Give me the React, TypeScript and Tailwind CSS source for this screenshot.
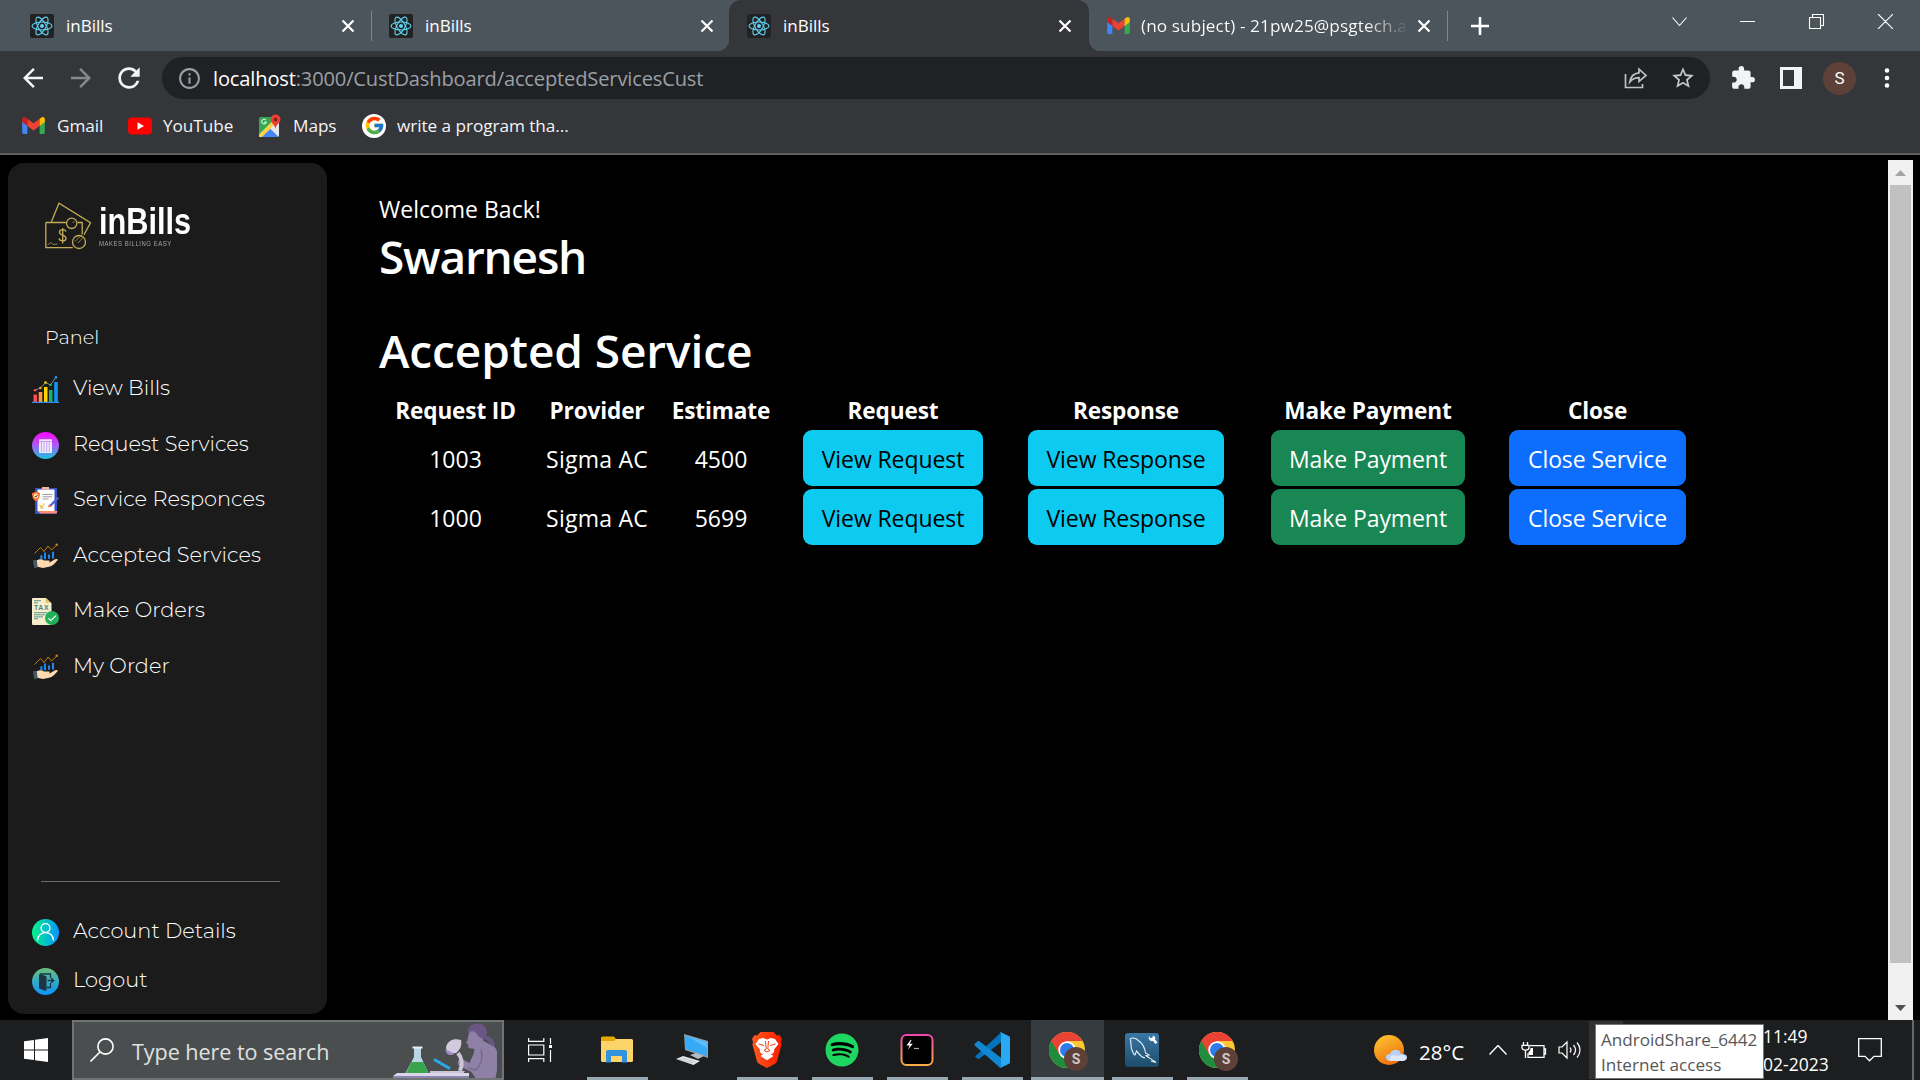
import type { ReactNode } from "react";
import { MdArrowBack, MdArrowForward, MdRefresh, MdInfoOutline, MdStarBorder, MdExtension } from "react-icons/md";
import { FaSpotify } from "react-icons/fa";
import { FcGoogle } from "react-icons/fc";

/* ---------- browser icons ---------- */

const ReactLogo = () => (
  <svg viewBox="0 0 24 24" className="h-6 w-6 shrink-0">
    <rect width="24" height="24" rx="2" fill="#222" />
    <g fill="none" stroke="#5fd3f3" strokeWidth="1.1">
      <ellipse cx="12" cy="12" rx="10" ry="4" />
      <ellipse cx="12" cy="12" rx="10" ry="4" transform="rotate(60 12 12)" />
      <ellipse cx="12" cy="12" rx="10" ry="4" transform="rotate(120 12 12)" />
    </g>
    <circle cx="12" cy="12" r="2" fill="#5fd3f3" />
  </svg>
);

const GmailLogo = () => (
  <svg viewBox="0 0 24 18" className="h-[17px] w-[23px] shrink-0">
    <path d="M0 3v13.5A1.5 1.5 0 0 0 1.500 18H5.500V7Z" fill="#4285f4" />
    <path d="M24 3v13.500A1.500 1.500 0 0 1 22.500 18H18.500V7Z" fill="#34a853" />
    <path d="M5.500 9.500V1.800L12 6.700l6.500-4.900v7.700L12 14.400Z" fill="#ea4335" />
    <path d="M18.500 1.800v7.700L24 5.400V2.500C24 .4 21.800-.6 20 .7Z" fill="#fbbc04" />
    <path d="M5.500 1.800v7.700L0 5.400V2.500C0 .4 2.200-.6 4 .7Z" fill="#c5221f" />
  </svg>
);

const YouTubeLogo = () => (
  <svg viewBox="0 0 24 18" className="h-[18px] w-6 shrink-0">
    <rect y="0.500" width="24" height="17" rx="4" fill="#f00" />
    <path d="M9.500 5.300v7.400L16 9Z" fill="#fff" />
  </svg>
);

const MapsLogo = () => (
  <svg viewBox="0 0 24 24" className="h-6 w-6 shrink-0">
    <rect x="1" y="3" width="20" height="20" rx="1.500" fill="#34a853" />
    <path d="M2 23 21 4v17a2 2 0 0 1-2 2Z" fill="#dfe3e8" />
    <path d="M2.500 23 11.500 14l9 9Z" fill="#4285f4" />
    <path d="M1 20.500 17.500 4l3 3L4 23H1Z" fill="#fbd24a" />
    <path d="m13 13 8 8V8Z" fill="#e6e8eb" />
    <path d="M17.500.5a5 5 0 0 0-5 5c0 3.700 4.300 4.500 5 9.500.7-5 5-5.800 5-9.500a5 5 0 0 0-5-5Z" fill="#ea4335" />
    <circle cx="17.500" cy="5.500" r="1.900" fill="#8c1c13" />
    <path d="M8 6.200a2.400 2.400 0 1 0 .4 2H6.200" fill="none" stroke="#fff" strokeWidth="1" />
  </svg>
);

const CloseX = () => (
  <svg viewBox="0 0 14 14" className="h-[14px] w-[14px] shrink-0">
    <path d="m1.500 1.500 11 11m0-11-11 11" stroke="#fff" strokeWidth="2.200" fill="none" />
  </svg>
);

const ShareIcon = () => (
  <svg viewBox="0 0 24 22" className="h-[22px] w-6 shrink-0" fill="none" stroke="#bdc1c6" strokeWidth="1.700">
    <path d="M1.500 7v13.500h17V17" />
    <path d="M15 2.200v3.600C9.500 6.300 6.600 9.500 5.800 15c2.600-3.300 5.400-4.300 9.200-4.300v3.800L22 8.400Z" />
  </svg>
);

/* ---------- sidebar icons ---------- */

const ChartIcon = () => (
  <svg viewBox="0 0 27 27" className="h-[27px] w-[27px]">
    <rect x="1.500" y="18.500" width="3.500" height="7.500" fill="#ff4b55" />
    <rect x="6.700" y="16" width="3.600" height="10" fill="#ff9a3c" />
    <rect x="12" y="11" width="3.500" height="15" fill="#ffd400" />
    <rect x="17" y="14" width="3.500" height="12" fill="#19b36b" />
    <rect x="22.200" y="6" width="3.600" height="20" fill="#1495f5" />
    <rect y="25.800" width="27" height="1.200" fill="#2b8ff0" />
    <path d="m2.500 14.500 6-2.500 5-5.500 5 2.500 5.500-8" fill="none" stroke="#8996a3" strokeWidth="0.900" />
    <circle cx="3" cy="14.300" r="1.300" fill="#ff4b55" />
    <circle cx="8.400" cy="12" r="1.300" fill="#ff9a3c" />
    <circle cx="13.500" cy="6.500" r="1.300" fill="#ffd400" />
    <circle cx="18.500" cy="9" r="1.300" fill="#19b36b" />
    <circle cx="24" cy="1.400" r="1.300" fill="#1495f5" />
  </svg>
);

const RequestIcon = () => (
  <svg viewBox="0 0 27 27" className="h-[27px] w-[27px]">
    <defs>
      <linearGradient id="request" x1="0" y1="0" x2="0" y2="1">
        <stop offset="0" stopColor="#fb05ff" />
        <stop offset="0.500" stopColor="#a95cf5" />
        <stop offset="1" stopColor="#16c5de" />
      </linearGradient>
    </defs>
    <circle cx="13.500" cy="13.500" r="13.500" fill="url(#request)" />
    <rect x="7" y="7.200" width="13" height="13.800" rx="0.800" fill="#fff" fillOpacity="0.850" />
    <path d="M9.500 9v11M12 9v11M14.700 9v11M17.300 9v11M7 9.500h13" stroke="#b58cf0" strokeWidth="0.700" />
  </svg>
);

const ResponseIcon = () => (
  <svg viewBox="0 0 27 27" className="h-[27px] w-[27px]">
    <rect x="3" y="1" width="22" height="26" fill="#3b4fc4" />
    <rect x="5.500" y="2.500" width="17" height="21.500" fill="#fff" />
    <rect x="10" y="0" width="7" height="2.600" fill="#f8b5a0" />
    <path d="M5.500 24h20l-1 2.400h-16Z" fill="#ff8a65" />
    <path d="M10.500 7.500h10M10.500 9.800h9.500M10.500 12h6" stroke="#9a9a9a" strokeWidth="1" />
    <path d="m0 6 4-1.300L8 6c0 4-1 7-4 8.200C1 13 0 10 0 6Z" fill="#ff6b35" />
    <circle cx="4" cy="9" r="2.400" fill="#ffe0a3" />
    <path d="m2.800 9 1 1.100L5.600 8" stroke="#333" strokeWidth="0.900" fill="none" />
    <path d="m7.500 18 2 2 3-3.500M8 21h4" stroke="#f2b632" strokeWidth="1.100" fill="none" />
    <path d="m17 18.500 8-8.300 2 .2-1 2.400-7.500 7.200Z" fill="#4a63d8" />
    <path d="m15.500 20.500 1.700-3.400 2.500 2.400Z" fill="#ef7b57" />
  </svg>
);

const HandChartIcon = () => (
  <svg viewBox="0 0 27 27" className="h-[27px] w-[27px]">
    <path d="m2.500 10.500 6-6 3.500 4 4-5.500 3.500 4L25 1.800" fill="none" stroke="#d9820f" strokeWidth="0.900" />
    <circle cx="24.700" cy="1.800" r="1.200" fill="#d9820f" />
    <path d="M8.300 12.300h2.200v4H8.300ZM12 9.500h2v6.700h-2ZM16 11.500h2v4.200h-2ZM20 8.700h2v6.700h-2Z" fill="#2283e8" />
    <path d="M1.200 17h3.600l.8 7.500-3 .8C1.500 23.500 1.200 20 1.200 17Z" fill="#455a64" />
    <path d="M4.800 17.300c3-1.600 5-1.300 7.200.2h4.800c1.300 0 1.300 1.500 0 1.700h-3.300 4.500c2.500-1.300 4.500-3.400 7.200-3.200.8.500.5 1.300-.3 2-2.500 2.600-4.700 5.500-8 5.700L11 25l-5.500-1.200Z" fill="#ffd9b0" />
  </svg>
);

const TaxIcon = () => (
  <svg viewBox="0 0 27 27" className="h-[27px] w-[27px]">
    <path d="M1 0h13l5.500 5.500V27H1a1 1 0 0 1-1-1V1a1 1 0 0 1 1-1Z" fill="#f6efc9" />
    <path d="M13.500 0v4.800h5.800Z" fill="#e9bf5c" />
    <path d="M2 2.700h7M2 4.800h4M2 14.700h13M2 16.800h11M2 18.900h9M2 20.800h4" stroke="#4d8a88" strokeWidth="0.900" />
    <text x="2" y="12.200" fontSize="6.800" fontWeight="700" fontFamily="Liberation Sans, sans-serif" fill="#4d7f86" textLength="14.500">TAX</text>
    <circle cx="20" cy="20" r="7" fill="#22b05b" />
    <path d="m16.300 20.300 2.500 2.200 5.200-4.800" fill="none" stroke="#fff" strokeWidth="1.100" />
  </svg>
);

const AccountIcon = () => (
  <svg viewBox="0 0 27 27" className="h-[27px] w-[27px]">
    <defs>
      <linearGradient id="account">
        <stop offset="0" stopColor="#00f58a" />
        <stop offset="1" stopColor="#0892ff" />
      </linearGradient>
    </defs>
    <circle cx="13.500" cy="13.500" r="13.500" fill="url(#account)" />
    <g fill="none" stroke="#fff" strokeWidth="1.400">
      <circle cx="13.500" cy="9" r="4.400" />
      <path d="M5.500 21.500c.3-10.500 15.700-10.500 16 0" />
    </g>
  </svg>
);

const LogoutIcon = () => (
  <svg viewBox="0 0 27 27" className="h-[27px] w-[27px]">
    <defs>
      <linearGradient id="logout" x1="0" y1="0" x2="0" y2="1">
        <stop offset="0" stopColor="#6cc07a" />
        <stop offset="0.500" stopColor="#34a9c4" />
        <stop offset="1" stopColor="#0a95ff" />
      </linearGradient>
    </defs>
    <circle cx="13.500" cy="13.500" r="13.500" fill="url(#logout)" />
    <path d="M7 6.200c2.500.2 5 1 7.500 2v14.500c-3-.2-6-1.200-7.500-3Z" fill="#1d3540" />
    <path d="M8 6h10.500v4M18.500 15v4.500h-4M15.500 12.500h6m-2.300-2.300 2.500 2.300-2.500 2.300" fill="none" stroke="#1d3540" strokeWidth="1.300" />
  </svg>
);

const BillsMark = () => (
  <svg viewBox="0 0 46 48" className="h-12 w-[46px] shrink-0" fill="none" stroke="#c5ab58" strokeWidth="1.300">
    <path d="M.8 20.500h20M.8 20.500v25.200h27M6.500 19.500 14 1.200l31.500 19.600-6.500 12M32.500 20.500h4.700v12" />
    <circle cx="26.700" cy="21.300" r="5.200" />
    <circle cx="34" cy="40" r="6.500" />
    <path d="M38 35.500 33 41M35 34.500l-5 5M2.500 43l3-2.500 3 2 4-.5M29.500 19l-2 2" strokeWidth="0.700" />
    <path d="M21 29.500c-1-2.500-6.500-2.500-6.500.7s6.500 2.600 6.500 6-6 3.400-7 .3M17.700 26v15.500" />
  </svg>
);

/* ---------- taskbar icons ---------- */

const SearchArt = () => (
  <svg viewBox="0 0 104 56" className="h-14 w-[104px] shrink-0">
    <path d="M77 9c-2 4-2 7-2.500 9l-1.500 3 2 1 .5 4 6 1-1 5-4 9-8-4c-4 0-5 5-2 7l12 6 4 6h20c3-14 4-26-1-31-4-3-8-4-11-6l-2-6 3-7Z" fill="#8f80a8" />
    <path d="M75 11C74 4 82-1 90 3c4 3 5 7 3 11 5 0 9 5 9 10-4 1-6-3-8-6-2-1-4-1-6-2l-3-2c-2-5-6-6-10-3Z" fill="#6a5683" />
    <path d="M88 27c2 8 1 15-5 21l-8-2" fill="none" stroke="#75648c" strokeWidth="1.200" />
    <path d="m42 38 14 8" stroke="#2fa8ea" strokeWidth="3" strokeLinecap="round" />
    <path d="M53 25c2-7 8-9 15-7 1 4 0 9-5 13-5 1-10 0-10-6Z" fill="#d3cadd" />
    <path d="m52.500 27 9 5-3 1c-4 0-6-2-6-6Z" fill="#a58ac8" />
    <path d="M65 31c4 5 5 11 2 18" stroke="#cdc4d8" strokeWidth="4" fill="none" />
    <path d="M37 49h35l-3 4H37Z" fill="#cbc3d6" />
    <path d="M21 25h7v10l8 17H12l9-17Z" fill="#b8d6e4" />
    <path d="M18.500 40h12l5 11.500H13Z" fill="#38a44c" />
    <path d="M19.500 25.500h10" stroke="#dff0f6" strokeWidth="2" />
    <path d="M4 51h72v3H0Z" fill="#ddd3ea" />
    <path d="M0 54h76v3H0Z" fill="#8b86b0" />
  </svg>
);

const TaskViewIcon = () => (
  <svg viewBox="0 0 24 24" className="h-6 w-6" fill="none" stroke="#fff" strokeWidth="1.200">
    <path d="M.6 0v3.400h15.200V0M.6 24v-3.400h15.200V24M.6 7h15.200v10H.6ZM22.500 0v6M22.500 12v12" />
    <rect x="21" y="7" width="3" height="3" fill="#fff" stroke="none" />
  </svg>
);

const ExplorerIcon = () => (
  <svg viewBox="0 0 32 28" className="h-7 w-8">
    <path d="M0 2A1.500 1.500 0 0 1 1.500.500H13l2 2.500v4H0Z" fill="#e6a800" />
    <path d="M0 5h13l2-2h15.500A1.500 1.500 0 0 1 32 4.500v20a1.500 1.500 0 0 1-1.500 1.500h-29A1.500 1.500 0 0 1 0 24.500Z" fill="#fdd46a" />
    <path d="M5 16a2 2 0 0 1 2-2h17a2 2 0 0 1 2 2v10.500h-5V20H10v6.500H5Z" fill="#3192dd" />
  </svg>
);

const ComputerIcon = () => (
  <svg viewBox="0 0 32 32" className="h-8 w-8">
    <path d="m8 0 24 7v17L9 16Z" fill="#8fa0aa" />
    <path d="m9 1.500 21.800 6.300V22L9.800 15Z" fill="#36a9f7" />
    <path d="M9 1.500 30.800 8v6L16 5Z" fill="#5dbcfa" />
    <path d="m14 21 6-2 8 3-6 3Z" fill="#b3bec4" />
    <path d="m0 25 7-3 17 5-6.500 4Z" fill="#e3e6e8" />
    <path d="m3 25 14 4M6 24l14 4" stroke="#a9b1b5" strokeWidth="0.600" />
  </svg>
);

const BraveIcon = () => (
  <svg viewBox="0 0 30 36" className="h-9 w-[30px]">
    <defs>
      <linearGradient id="brave">
        <stop offset="0" stopColor="#ff5a1f" />
        <stop offset="1" stopColor="#f91d00" />
      </linearGradient>
    </defs>
    <path d="M8.500 0h13L25 3.500l2.500-.5L30 7l-1 3 .6 2.500-4.400 16c-.5 2-1.200 2.600-2.500 3.500L15 36l-7.700-4C6 31 5.300 30.500 4.800 28.500L.4 12.500 1 10 0 7l2.500-4 2.500.5Z" fill="url(#brave)" />
    <path d="m15 7.500 4-1.500 4 1 3.500 5-4.500 5.500c.8 2.500-1 4-3 4.500l-2-1.200 4.500 3.200L15 28.200 8.500 24l4.500-3.200-2 1.200c-2-.5-3.800-2-3-4.500L3.500 12 7 7l4-1Z" fill="#fff" />
    <path d="m6.500 12 5.500 1.500M23.500 12 18 13.500M13.500 9l.7 8-2.200 1.500 3 1.500 3-1.500-2.200-1.500.7-8" fill="none" stroke="#fb3d10" strokeWidth="1" />
  </svg>
);

const TerminalIcon = () => (
  <svg viewBox="0 0 34 34" className="h-[34px] w-[34px]">
    <defs>
      <linearGradient id="term" x1="0" y1="0" x2="0" y2="1">
        <stop offset="0" stopColor="#f046b0" />
        <stop offset="1" stopColor="#f9ac45" />
      </linearGradient>
    </defs>
    <rect x="1.500" y="2" width="31" height="30" rx="5" fill="#000" stroke="url(#term)" strokeWidth="2" />
    <path d="m10.500 7-4 5.500h3L8 16.500l4.800-5.800H9.700L11.500 7Z" fill="#fff" />
    <path d="M14 15.500h5" stroke="#aaa" strokeWidth="1.200" />
  </svg>
);

const VsCodeIcon = () => (
  <svg viewBox="0 0 36 36" className="h-9 w-9">
    <path d="M1 24.500 3.500 26.700a1.500 1.500 0 0 0 1.800.1L27 10.300V.5Z" fill="#0274bd" />
    <path d="M1 11.500 3.500 9.300a1.500 1.500 0 0 1 1.800-.1L27 25.700V35.500L25.500 35.300 1 13.700a1.500 1.500 0 0 1 0-2.200Z" fill="#1087d0" />
    <path d="M25 35.600c1 .5 1.600.3 2.200 0L34.700 32c.8-.4 1.300-1.200 1.300-2V6c0-.8-.5-1.600-1.300-2L27.200.4c-.7-.3-1.500-.2-2.200.1 1-.3 2 .4 2 1.500v32c0 1.100-1 1.800-2 1.600Z" fill="#2aa8f2" />
  </svg>
);

const ChromeIcon = () => (
  <svg viewBox="0 0 40 40" className="h-10 w-10">
    <circle cx="18" cy="18" r="18" fill="#fcc934" />
    <path d="M18 18 2.400 9A18 18 0 0 0 18 36l7.800-13.500Z" fill="#1e8e3e" />
    <path d="M2.400 9a18 18 0 0 1 31.200 0H18l-7.800 13.500Z" fill="#ea4335" />
    <circle cx="18" cy="18" r="8.700" fill="#fff" />
    <circle cx="18" cy="18" r="7" fill="#2f7bea" />
    <circle cx="27" cy="27" r="12" fill="#5d4037" />
    <text x="27" y="32" textAnchor="middle" fontSize="14" fontWeight="700" fontFamily="Roboto, sans-serif" fill="#cfc8c5">S</text>
  </svg>
);

const WorkbenchIcon = () => (
  <svg viewBox="0 0 34 34" className="h-[34px] w-[34px]">
    <defs>
      <linearGradient id="bench" x1="0" y1="0" x2="0" y2="1">
        <stop offset="0" stopColor="#3a78a5" />
        <stop offset="1" stopColor="#1d4c6b" />
      </linearGradient>
    </defs>
    <rect width="34" height="34" rx="3" fill="url(#bench)" />
    <path d="M5 6c3-2 6-1 9 2 4 3 6 8 6.500 12l3.500 2-3 .5c2 2 5 3 10 7l-5-1.500M5 6c2 3 0 7 2 11 1 3 2 5 3 5l1.500-4c2 2 3.500 6 8.500 7" fill="none" stroke="#e8f1f6" strokeWidth="1.100" />
    <path d="m24 3 1.500 2.200 2-.7L28 2.500c2 .5 3 2.500 2 4l2.500 3-2 1.500-2.500-3c-3 .5-5-2-4-5Z" fill="#fff" />
  </svg>
);

const WeatherIcon = () => (
  <svg viewBox="0 0 33 34" className="h-[34px] w-[33px] shrink-0">
    <defs>
      <linearGradient id="sun" x1="0.200" y1="0" x2="0.700" y2="1">
        <stop offset="0" stopColor="#fbc531" />
        <stop offset="1" stopColor="#f06a0a" />
      </linearGradient>
    </defs>
    <circle cx="15" cy="17" r="15" fill="url(#sun)" />
    <path d="M16 28c-5 0-6-7 0-7 2-6 10-5 11 0 8-1 8 7 1 7Z" fill="#bcd0f5" />
    <path d="M16 25c3-5 5-2 8-2s4-2 8 1c0 3-2 4-4 4H16Z" fill="#dce7fb" />
  </svg>
);

/* ---------- building blocks ---------- */

const TabTitle = ({ children }: { children: ReactNode }) => (
  <span className="text-[17px] leading-6 text-white">{children}</span>
);

const BookmarkLabel = ({ children, className }: { children: ReactNode; className: string }) => (
  <span className={`block text-[17.2px] leading-6 tracking-[-0.003em] whitespace-nowrap text-gray-100 ${className}`}>{children}</span>
);

const services: { label: string; icon: ReactNode }[] = [
  { label: "View Bills", icon: <ChartIcon /> },
  { label: "Request Services", icon: <RequestIcon /> },
  { label: "Service Responces", icon: <ResponseIcon /> },
  { label: "Accepted Services", icon: <HandChartIcon /> },
  { label: "Make Orders", icon: <TaxIcon /> },
  { label: "My Order", icon: <HandChartIcon /> },
];

const NavItem = ({ label, icon }: { label: string; icon: ReactNode }) => (
  <div className="flex h-[27px] items-center gap-[14px]">
    {icon}
    <span className="pb-[3px] text-[20.9px] leading-6 font-light whitespace-nowrap text-white">{label}</span>
  </div>
);

const Task = ({ children, line = true, active = false }: { children: ReactNode; line?: boolean; active?: boolean }) => (
  <div className="flex h-[60px] w-[75px] flex-col items-center">
    <div className={`flex h-[57px] items-center justify-center pt-0.5 pr-0.5 ${active ? "w-[73px] bg-[#363b3f]" : "w-[61px]"}`}>{children}</div>
    <div className={`h-[3px] ${line ? "bg-[#98a8b3]" : ""} ${active ? "w-[73px]" : "w-[61px]"}`} />
  </div>
);

const TopBar = () => (
  <header>
    <div className="flex h-[51px] bg-[#4c555b]">
      <div className="flex w-[372px] items-center pl-[30px]">
        <ReactLogo />
        <div className="w-[275px] pl-3"><TabTitle>inBills</TabTitle></div>
        <div className="ml-3"><CloseX /></div>
        <div className="ml-auto h-[30px] w-px bg-[#80868a]" />
      </div>
      <div className="flex w-[357px] items-center pl-[17px]">
        <ReactLogo />
        <div className="w-[275px] pl-3"><TabTitle>inBills</TabTitle></div>
        <div className="ml-3"><CloseX /></div>
      </div>
      <div className="relative flex w-[360px] items-center rounded-t-xl bg-[#35363a] pl-[18px]">
        <div className="absolute bottom-0 -left-3 h-3 w-3 bg-[radial-gradient(circle_at_0_0,#4c555b_12px,#35363a_12.5px)]" />
        <div className="absolute -right-3 bottom-0 h-3 w-3 bg-[radial-gradient(circle_at_100%_0,#4c555b_12px,#35363a_12.5px)]" />
        <ReactLogo />
        <div className="w-[275px] pl-3"><TabTitle>inBills</TabTitle></div>
        <div className="ml-3"><CloseX /></div>
      </div>
      <div className="flex w-[359px] items-center pl-[18px]">
        <GmailLogo />
        <div className="ml-[11px] w-[264px] bg-gradient-to-r from-white from-85% to-white/10 bg-clip-text text-[17.2px] leading-6 tracking-[0.006em] whitespace-nowrap text-transparent">(no subject) - 21pw25@psgtech.a</div>
        <div className="ml-[12px]"><CloseX /></div>
        <div className="ml-auto h-[30px] w-px bg-[#80868a]" />
      </div>
      <div className="flex flex-1 items-center pl-[23px]">
        <svg viewBox="0 0 18 18" className="h-[18px] w-[18px]"><path d="M9 0v18M0 9h18" stroke="#fff" strokeWidth="2.600" /></svg>
      </div>
      <svg viewBox="0 0 221 15" className="mt-[14px] mr-[27px] h-[15px] w-[221px]" fill="none" stroke="#fff" strokeWidth="1.100">
        <path d="m.5 3.500 7 8 7-8M68 7.500h15M137.500 3.500h11v11h-11ZM140.500 3.500v-3h11v11h-3M206 0l15 15m0-15-15 15" />
      </svg>
    </div>
    <div className="flex h-[54px] items-center bg-[#35363a]">
      <MdArrowBack className="ml-[18px] h-[30px] w-[30px] text-gray-100" />
      <MdArrowForward className="ml-[18px] h-[30px] w-[30px] text-[#86888b]" />
      <MdRefresh className="ml-[17px] h-[32px] w-[32px] text-gray-100" />
      <div className="ml-[17px] flex h-[42px] w-[1548px] items-center rounded-full bg-[#202124] pl-[15px]">
        <MdInfoOutline className="h-[25px] w-[25px] text-[#9aa0a6]" />
        <span className="ml-[11px] pt-0.5 text-[20.1px] leading-6 tracking-[-0.008em] text-[#9aa0a6]"><span className="text-white">localhost</span>:3000/CustDashboard/acceptedServicesCust</span>
        <div className="mr-[14px] ml-auto flex items-center gap-[22px]">
          <ShareIcon />
          <MdStarBorder className="h-[26px] w-[26px] text-[#c4c7cb]" />
        </div>
      </div>
      <MdExtension className="ml-[20px] h-[26px] w-[26px] text-[#f1f3f4]" />
      <svg viewBox="0 0 22 22" className="ml-6 h-[22px] w-[22px]">
        <path d="M0 0h22v22H0ZM3 3v16h11V3Z" fill="#f1f3f4" fillRule="evenodd" />
      </svg>
      <div className="ml-[21px] flex h-[33px] w-[33px] items-center justify-center rounded-full bg-[#5d4037] pt-px font-[Roboto,sans-serif] text-[17px] text-white">S</div>
      <svg viewBox="0 0 6 20" className="ml-7 h-5 w-[6px]" fill="#fff"><circle cx="3" cy="2.500" r="2.300" /><circle cx="3" cy="10" r="2.300" /><circle cx="3" cy="17.500" r="2.300" /></svg>
    </div>
    <div className="flex h-[50px] items-center border-b-2 border-[#5f6163] bg-[#35363a] pb-[7px] pl-[22px]">
      <GmailLogo />
      <BookmarkLabel className="ml-[12px] w-[71px]">Gmail</BookmarkLabel>
      <YouTubeLogo />
      <BookmarkLabel className="ml-[11px] w-[95px]">YouTube</BookmarkLabel>
      <MapsLogo />
      <BookmarkLabel className="ml-[11px] w-[69px]">Maps</BookmarkLabel>
      <div className="flex h-6 w-6 items-center justify-center rounded-full bg-white"><FcGoogle className="h-[21px] w-[21px]" /></div>
      <BookmarkLabel className="ml-[11px]">write a program tha...</BookmarkLabel>
    </div>
  </header>
);

const Sidebar = () => (
  <aside className="mt-2 ml-2 flex h-[851px] w-[319px] flex-col rounded-2xl bg-[#1b1b1b] font-[Montserrat,Inter,sans-serif]">
    <div className="mt-[39px] flex h-[48px] gap-2 pl-[37px]">
      <BillsMark />
      <div className="pt-[2px]">
        <div className="h-[36px] origin-left scale-x-[0.83] font-['Liberation_Sans',sans-serif] text-[37px] leading-[36px] font-bold text-white">inBills</div>
        <div className="h-[8px] origin-left scale-x-[0.92] font-['Liberation_Sans',sans-serif] text-[6.5px] leading-[8px] tracking-[0.09em] text-[#a5a5a5]">MAKES BILLING EASY</div>
      </div>
    </div>
    <div className="mt-[75px] pl-[37px] text-[19.3px] leading-6 font-light text-white">Panel</div>
    <nav className="mt-[27px] flex flex-col gap-[28.5px] pl-6">
      {services.map((s) => <NavItem key={s.label} {...s} />)}
    </nav>
    <div className="mt-[200px] ml-[33px] h-px w-[239px] bg-[#6b6b6b]" />
    <div className="mt-[37px] flex flex-col gap-[22px] pl-6">
      <NavItem label="Account Details" icon={<AccountIcon />} />
      <NavItem label="Logout" icon={<LogoutIcon />} />
    </div>
  </aside>
);

const rows = [
  { id: "1003", provider: "Sigma AC", estimate: "4500" },
  { id: "1000", provider: "Sigma AC", estimate: "5699" },
];

const btn = "flex h-14 items-center justify-center rounded-[9px] pt-0.5 tracking-[-0.004em]";

const Main = () => (
  <main className="ml-[52px] w-[1509px] pt-[39px] text-[23px] text-white">
    <p className="h-[30px] leading-[30px]">Welcome Back!</p>
    <h1 className="mt-[4px] h-[56px] text-[46px] leading-[56px] font-semibold tracking-[-0.026em]">Swarnesh</h1>
    <h1 className="mt-[38px] h-[56px] text-[46px] leading-[56px] font-semibold tracking-[-0.002em]">Accepted Service</h1>
    <div className="mt-[15px] grid h-[36px] grid-cols-[153px_130px_118px_226px_240px_244px_215px] text-center text-[22.6px] leading-[36px] font-bold tracking-[-0.006em] whitespace-nowrap">
      <span>Request ID</span><span>Provider</span><span>Estimate</span><span>Request</span><span>Response</span><span>Make Payment</span><span>Close</span>
    </div>
    <div className="mt-px flex flex-col gap-[3px]">
      {rows.map((r) => (
        <div key={r.id} className="grid h-14 grid-cols-[153px_130px_118px_226px_240px_244px_215px] items-center justify-items-center whitespace-nowrap">
          <span className="pt-0.5">{r.id}</span>
          <span className="pt-0.5 tracking-[0.01em]">{r.provider}</span>
          <span className="pt-0.5">{r.estimate}</span>
          <button className={`${btn} w-[180px] bg-[#0dcaf0] text-black`}>View Request</button>
          <button className={`${btn} w-[196px] bg-[#0dcaf0] text-black`}>View Response</button>
          <button className={`${btn} w-[194px] bg-[#198754]`}>Make Payment</button>
          <button className={`${btn} w-[177px] bg-[#0d6efd]`}>Close Service</button>
        </div>
      ))}
    </div>
  </main>
);

const Scrollbar = () => (
  <div className="mt-[5px] flex h-[860px] w-[25px] flex-col items-center bg-[#f1f1f1]">
    <svg viewBox="0 0 25 25" className="h-[25px] w-[25px]"><path d="M7 16h11l-5.500-6Z" fill="#a3a3a3" /></svg>
    <div className="h-[778px] w-[21px] bg-[#c1c1c1]" />
    <svg viewBox="0 0 25 25" className="mt-auto h-[25px] w-[25px]"><path d="M7 10h11l-5.500 6Z" fill="#505050" /></svg>
  </div>
);

const Taskbar = () => (
  <footer className="relative flex h-[60px] items-center bg-[#1d1e20]">
    <div className="flex w-[72px] justify-center">
      <svg viewBox="0 0 24 24" className="h-6 w-6" fill="#fff"><path d="M0 3.300 10 2v9.500H0ZM11 1.800 24 0v11.500H11ZM0 12.500h10V22L0 20.700ZM11 12.500h13V24l-13-1.800Z" /></svg>
    </div>
    <div className="flex h-[60px] w-[432px] items-center border-2 border-[#717476] bg-[#4a4e4f] pl-4">
      <svg viewBox="0 0 24 24" className="h-6 w-6" fill="none" stroke="#fff" strokeWidth="1.600"><circle cx="15.500" cy="8.500" r="7.600" /><path d="M10 14 .5 23.500" /></svg>
      <span className="ml-[18px] pt-[3px] text-[21.6px] leading-[30px] tracking-[-0.003em] whitespace-nowrap text-[#e0e0e0]">Type here to search</span>
      <div className="mr-[5px] ml-auto"><SearchArt /></div>
    </div>
    <div className="ml-6 w-[52px]"><TaskViewIcon /></div>
    <div className="flex">
      <Task><ExplorerIcon /></Task>
      <Task line={false}><ComputerIcon /></Task>
      <Task><BraveIcon /></Task>
      <Task><div className="flex h-7 w-7 items-center justify-center rounded-full bg-black"><FaSpotify className="h-[34px] w-[34px] shrink-0 text-[#1ed760]" /></div></Task>
      <Task><TerminalIcon /></Task>
      <Task><VsCodeIcon /></Task>
      <Task active><div className="-mr-1 -mb-1"><ChromeIcon /></div></Task>
      <Task><WorkbenchIcon /></Task>
      <Task><div className="-mr-1 -mb-1"><ChromeIcon /></div></Task>
    </div>
    <div className="ml-[119px] flex items-center">
      <WeatherIcon />
      <span className="ml-3 w-[70px] pt-[3px] text-[20.5px] leading-[30px] text-white">28°C</span>
      <svg viewBox="0 0 18 10" className="h-[10px] w-[18px]" fill="none" stroke="#fff" strokeWidth="1.400"><path d="m.5 9.500 8.500-9 8.500 9" /></svg>
      <svg viewBox="0 0 26 18" className="ml-[14px] h-[18px] w-[26px]" fill="none" stroke="#fff" strokeWidth="1.300"><path d="M9 4.700h14v11.600H7v-4M23 8h1.500v5H23M2.500 1v3M6.500 1v3M1 4.300h7v2.500c0 3-7 3-7 0ZM4.500 9v8" /><path d="M9.500 7H12v7H7.500v-3c1.500-1 2-2 2-4Z" fill="#fff" stroke="none" /></svg>
      <svg viewBox="0 0 24 20" className="ml-[11px] h-5 w-6" fill="none" stroke="#fff" strokeWidth="1.200"><path d="M1 7v6h3l5 5V2L4 7ZM12 7.500c1.200 1.500 1.200 3.500 0 5M15.500 5c2.500 3 2.500 7 0 10M19 2.500c4 4.500 4 10.500 0 15" /></svg>
    </div>
    <div className="absolute top-px left-[1589px] h-[58px] w-[34px] bg-[#313234]" />
    <div className="mr-[28px] ml-auto w-[67px] text-[17.5px] leading-[28px] whitespace-nowrap text-white">
      <div>11:49</div>
      <div>02-2023</div>
    </div>
    <svg viewBox="0 0 24 24" className="mr-[30px] h-6 w-6" fill="none" stroke="#fff" strokeWidth="1.300"><path d="M.7.7h22.600v17.600H16l-4.500 4.500-4.500-4.500H.7Z" /></svg>
    <div className="mr-[6px] h-[60px] w-[2px] bg-[#65676a]" />
    <div className="absolute top-1 left-[1595px] h-[55px] w-[169px] border border-[#767676] bg-white pt-[2px] pl-[5px] text-[17.1px] leading-[25px] whitespace-nowrap text-[#575757]">
      <div>AndroidShare_6442</div>
      <div>Internet access</div>
    </div>
  </footer>
);

export default function App() {
  return (
    <div className="h-[1080px] w-[1920px] overflow-hidden bg-black font-['Open_Sans','Noto_Sans',sans-serif]">
      <TopBar />
      <div className="flex h-[865px]">
        <Sidebar />
        <Main />
        <Scrollbar />
      </div>
      <Taskbar />
    </div>
  );
}
